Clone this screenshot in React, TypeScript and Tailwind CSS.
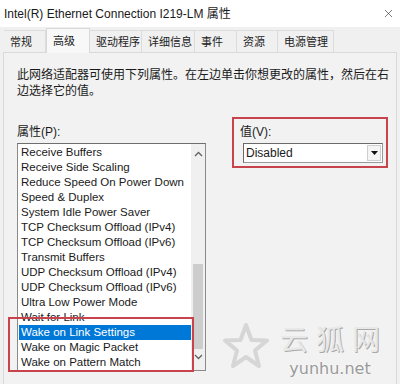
import React from "react";
import { X } from "lucide-react";

const tabs = [
  { label: "常规", w: "w-[42px]" },
  { label: "高级", w: "w-[44px]", active: true },
  { label: "驱动程序", w: "w-[52px]" },
  { label: "详细信息", w: "w-[53px]" },
  { label: "事件", w: "w-[42px]" },
  { label: "资源", w: "w-[41px]" },
  { label: "电源管理", w: "w-[56px]" },
];

const props = [
  "Receive Buffers",
  "Receive Side Scaling",
  "Reduce Speed On Power Down",
  "Speed & Duplex",
  "System Idle Power Saver",
  "TCP Checksum Offload (IPv4)",
  "TCP Checksum Offload (IPv6)",
  "Transmit Buffers",
  "UDP Checksum Offload (IPv4)",
  "UDP Checksum Offload (IPv6)",
  "Ultra Low Power Mode",
  "Wait for Link",
  "Wake on Link Settings",
  "Wake on Magic Packet",
  "Wake on Pattern Match",
];

const font = "font-['Liberation_Sans','Noto_Sans_CJK_SC',sans-serif]";

export default function App() {
  return (
    <div className={`relative w-[400px] h-[384px] overflow-hidden bg-[#f0f0f0] text-[#1a1a1a] ${font}`}>
      {/* title bar */}
      <div className="h-[27px] bg-white flex items-center justify-between pl-[4px] pr-[5px]">
        <span className="text-[12px]">Intel(R) Ethernet Connection I219-LM 属性</span>
        <X size={13} strokeWidth={1.2} className="text-[#333]" />
      </div>

      {/* tabs */}
      <div className="flex items-end h-[25px] pl-[4px]">
        {tabs.map((t) => (
          <div
            key={t.label}
            className={
              t.active
                ? `${t.w} h-[25px] -mb-px bg-[#f8f8f8] border border-b-0 border-[#d9d9d9] pl-[6px] pt-[4px] text-[11px] relative z-10`
                : `${t.w} h-[22px] border-t border-r border-[#dcdcdc] pl-[6px] pt-[3px] text-[11px] text-[#222] bg-[#f0f0f0]`
            }
          >
            {t.label}
          </div>
        ))}
      </div>

      {/* page */}
      <div className="mx-[3px] h-[340px] border border-[#d9d9d9] bg-[#f2f2f2] pl-[13px] pt-[14px]">
        <p className="text-[12px] leading-[16px] w-[372px]">
          此网络适配器可使用下列属性。在左边单击你想更改的属性，然后在右边选择它的值。
        </p>

        <div className="flex mt-[18px]">
          <div className="flex flex-col">
            <div className="text-[12px] leading-[16px] mt-[7px]">属性(P):</div>
            <div className="mt-[3px] w-[189px] h-[228px] border border-[#8a8a8a] border-t-[#6e6e6e] bg-white flex">
              <div className="flex-1 pt-[1px] pl-[1px]">
                {props.map((p, i) => (
                  <div
                    key={p}
                    className={`h-[15px] leading-[15px] text-[11.5px] pl-[2px] whitespace-nowrap ${
                      i === 12 ? "bg-[#0078d7] text-white" : ""
                    }`}
                  >
                    {p}
                  </div>
                ))}
              </div>
              <div className="w-[14px] bg-[#f0f0f0] flex flex-col items-center">
                <svg width="9" height="6" viewBox="0 0 9 6" className="mt-[7px]">
                  <path d="M1 5 L4.5 1.5 L8 5" fill="none" stroke="#606060" strokeWidth="1.3" />
                </svg>
                <div className="w-[10px] h-[85px] bg-[#cdcdcd] mt-[107px]" />
                <svg width="9" height="6" viewBox="0 0 9 6" className="mt-[5px]">
                  <path d="M1 1 L4.5 4.5 L8 1" fill="none" stroke="#606060" strokeWidth="1.3" />
                </svg>
              </div>
            </div>
          </div>

          <div className="ml-[26px] self-start w-[156px] border-2 border-[#c8434c] pl-[9px] pr-[3px] pt-[5px] pb-[3px]">
            <div className="text-[12px] leading-[16px] -ml-[3px]">值(V):</div>
            <div className="mt-[3px] h-[20px] w-[140px] border border-[#9a9a9a] border-l-[#6a6a6a] border-t-[#6a6a6a] bg-white flex items-center justify-between">
              <span className="text-[12px] pl-[2px]">Disabled</span>
              <div className="w-[14px] h-[16px] mr-[1px] border border-[#cfcfcf] bg-[#f4f4f4] flex items-center justify-center">
                <svg width="7" height="4" viewBox="0 0 7 4">
                  <path d="M0 0 H7 L3.5 4 Z" fill="#111" />
                </svg>
              </div>
            </div>
          </div>
        </div>
      </div>

      {/* annotation box over the list */}
      <div className="absolute left-[8px] top-[317px] w-[186px] h-[55px] border-2 border-[#c8434c]" />

      {/* watermark */}
      <svg
        width="48"
        height="50"
        viewBox="0 0 48 50"
        className="absolute left-[222px] top-[322px] pointer-events-none"
      >
        <path
          d="M24 3 L29.5 18 L45 18.5 L33 28.5 L37 44 L24 35 L11 44 L15 28.5 L3 18.5 L18.5 18 Z"
          fill="none"
          stroke="#d6d6d6"
          strokeWidth="4"
          strokeLinejoin="round"
        />
      </svg>
      <div className="absolute left-[272px] top-[318px] flex flex-col items-center pointer-events-none">
        <div className="text-[28px] leading-[41px] tracking-[8px] pl-[8px] text-[#e8e8e8] font-['Noto_Sans_CJK_SC',sans-serif] [text-shadow:1px_1px_0_#a9a9a9]">
          云狐网
        </div>
        <div className="text-[16px] leading-[19px] text-[#9a9a9a] font-['DejaVu_Sans',sans-serif] [text-shadow:0_0_2px_#fff]">
          yunhu.net
        </div>
      </div>
    </div>
  );
}
